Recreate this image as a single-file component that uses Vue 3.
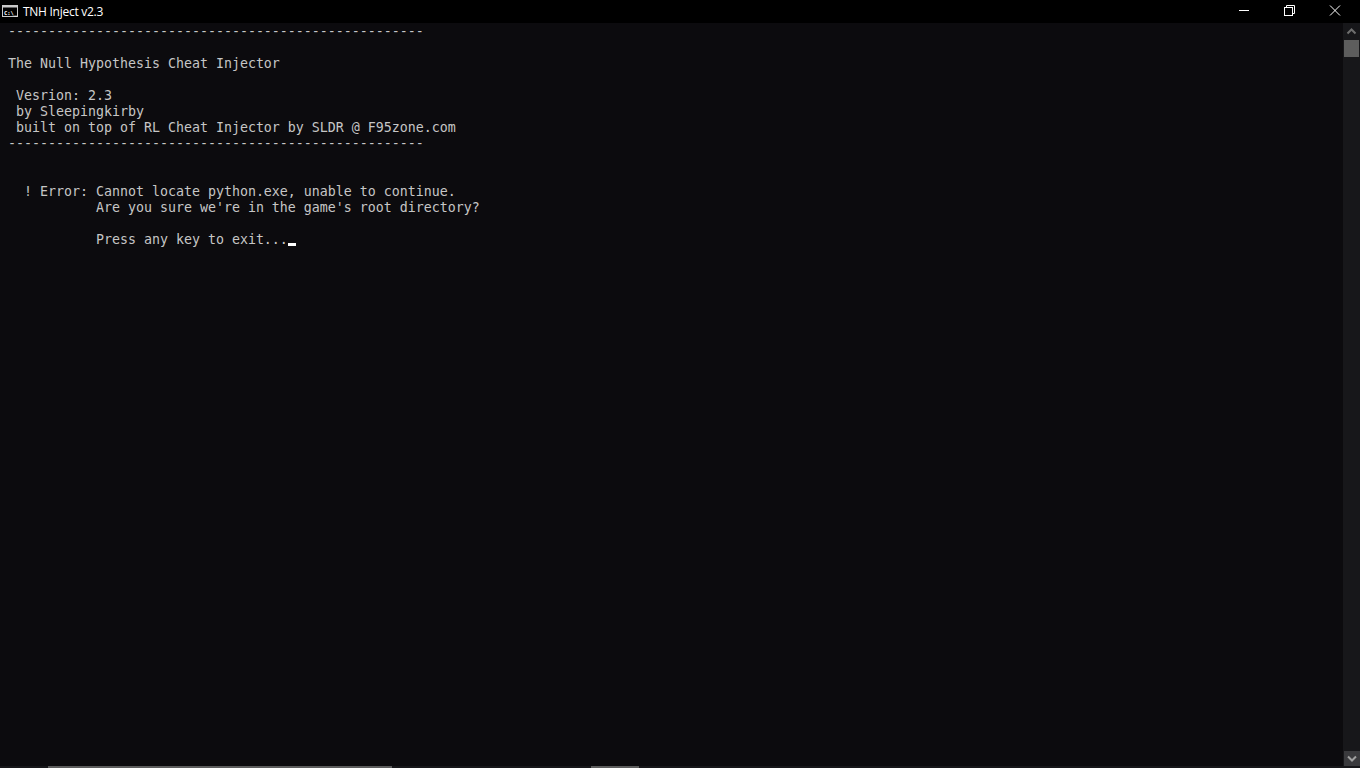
<script setup>
const lines = [
  '----------------------------------------------------',
  '',
  'The Null Hypothesis Cheat Injector',
  '',
  ' Vesrion: 2.3',
  ' by Sleepingkirby',
  ' built on top of RL Cheat Injector by SLDR @ F95zone.com',
  '----------------------------------------------------',
  '',
  '',
  "  ! Error: Cannot locate python.exe, unable to continue.",
  "           Are you sure we're in the game's root directory?",
  '',
]
</script>

<template>
  <div class="window">
    <header class="titlebar">
      <svg class="appicon" width="16" height="12" viewBox="0 0 16 12">
        <rect x="0.5" y="0.5" width="15" height="11" fill="#000" stroke="#c8c8c8" />
        <rect x="1" y="1" width="14" height="1.500" fill="#c8c8c8" />
        <text x="2" y="9.500" class="icontext">C:\_</text>
      </svg>
      <span class="title">TNH Inject v2.3</span>
      <div class="controls">
        <div class="ctl">
          <svg width="12" height="12" viewBox="0 0 12 12"><path d="M2 5.500h10" stroke="#fff" /></svg>
        </div>
        <div class="ctl">
          <svg width="12" height="12" viewBox="0 0 12 12" fill="none" stroke="#fff"><path d="M3.500 2.500V.5h8v8H9.500" /><rect x="1.500" y="2.500" width="8" height="8" /></svg>
        </div>
        <div class="ctl">
          <svg width="12" height="12" viewBox="0 0 12 12"><path d="M1 0.500l10 10M11 0.500L1 10.500" stroke="#fff" /></svg>
        </div>
      </div>
    </header>
    <div class="body">
      <main class="console">
        <pre class="text"><template v-for="(l, i) in lines" :key="i">{{ l }}
</template>           Press any key to exit...<span class="cursor"></span></pre>
      </main>
      <aside class="scrollbar">
        <svg class="arrow" width="17" height="17" viewBox="0 0 17 17"><path d="M4.500 10.500l4-4 4 4" stroke="#6e6e6e" stroke-width="2" fill="none" /></svg>
        <div class="thumb"></div>
        <div class="track"></div>
        <div class="arrowbox">
          <svg width="16" height="15" viewBox="0 0 16 15"><path d="M4 5.500l4 4 4-4" stroke="#a0a0a0" stroke-width="2" fill="none" /></svg>
        </div>
      </aside>
    </div>
    <footer class="hbar">
      <div class="hgap1"></div>
      <div class="hthumb hthumb1"></div>
      <div class="hgap2"></div>
      <div class="hthumb hthumb2"></div>
    </footer>
  </div>
</template>

<style>
html, body { margin: 0; background: #0c0b0e; overflow: hidden; }
</style>

<style scoped>
.window { width: 1360px; height: 768px; display: flex; flex-direction: column; background: #0c0b0e; overflow: hidden; }
.titlebar { height: 23px; flex: none; background: #000; display: flex; align-items: center; color: #fff; }
.appicon { margin: 0 0 1px 2px; flex: none; }
.icontext { font: bold 5.500px "DejaVu Sans Mono", monospace; fill: #fff; }
.title { margin-left: 5px; font: 12px/23px "Open Sans", "Liberation Sans", sans-serif; letter-spacing: -0.27px; }
.controls { margin-left: auto; margin-right: 2px; align-self: flex-start; display: flex; }
.ctl { width: 46px; height: 22px; display: flex; align-items: center; justify-content: center; }
.body { flex: 1; display: flex; min-height: 0; }
.console { flex: 1; padding: 1px 0 0 8px; }
.text { margin: 0; font: 13.29px/16px "DejaVu Sans Mono", monospace; color: #c6c6c6; white-space: pre; }
.cursor { display: inline-block; width: 8px; height: 3px; margin-bottom: -2px; background: #fff; }
.scrollbar { width: 17px; flex: none; background: #17171a; display: flex; flex-direction: column; }
.arrow { flex: none; }
.thumb { height: 17px; width: 15px; margin-left: 1px; background: #5d5d5d; flex: none; }
.track { flex: 1; }
.arrowbox { height: 15px; width: 16px; margin-left: 1px; background: #3a3a3d; flex: none; }
.hbar { height: 2px; flex: none; background: #17171a; display: flex; }
.hgap1 { width: 48px; }
.hthumb { background: #5d5d5d; }
.hthumb1 { width: 344px; }
.hgap2 { width: 199px; }
.hthumb2 { width: 48px; }
</style>
